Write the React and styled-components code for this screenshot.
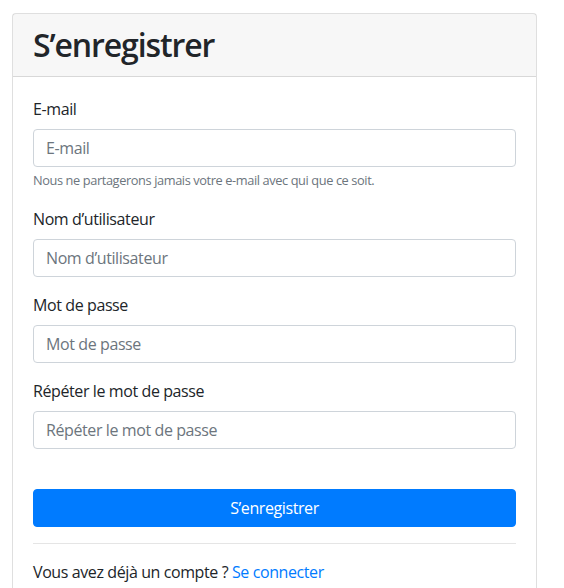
import React from "react";
import styled, { createGlobalStyle } from "styled-components";

const Global = createGlobalStyle`
  html, body { margin: 0; padding: 0; background: #fff; }
  body {
    font-family: "Open Sans", "Noto Sans", sans-serif;
    font-size: 16px;
    line-height: 1.5;
    letter-spacing: -0.025em;
    color: #212529;
  }
  * { box-sizing: border-box; }
`;

const Page = styled.div`
  padding: 13px 0 0 12px;
`;

const Card = styled.div`
  width: 525px;
  border: 1px solid rgba(0, 0, 0, 0.125);
  border-radius: 4px;
  background: #fff;
`;

const CardHeader = styled.div`
  padding: 12px 20px;
  background: rgba(0, 0, 0, 0.03);
  border-bottom: 1px solid rgba(0, 0, 0, 0.125);
`;

const Title = styled.h2`
  margin: 0;
  font-size: 32px;
  font-weight: 600;
  letter-spacing: -0.035em;
  line-height: 1.2;
`;

const CardBody = styled.form`
  padding: 20px;
  display: flex;
  flex-direction: column;
`;

const Group = styled.div`
  margin-bottom: 16px;
  display: flex;
  flex-direction: column;
`;

const Label = styled.label`
  margin-bottom: 8px;
  line-height: 24px;
`;

const Input = styled.input`
  height: 38px;
  width: 100%;
  padding: 6px 12px;
  font: inherit;
  font-size: 16px;
  letter-spacing: -0.025em;
  color: #495057;
  border: 1px solid #ced4da;
  border-radius: 4px;
  outline: none;
  &::placeholder { color: #6c757d; opacity: 1; }
`;

const Help = styled.small`
  margin-top: 4px;
  font-size: 12.8px;
  line-height: 19.2px;
  color: #6c757d;
`;

const Button = styled.button`
  margin-top: 24px;
  height: 38px;
  width: 100%;
  font: inherit;
  font-size: 16px;
  letter-spacing: -0.025em;
  color: #fff;
  background: #007bff;
  border: 1px solid #007bff;
  border-radius: 4px;
`;

const Rule = styled.hr`
  margin: 16px 0;
  border: 0;
  border-top: 1px solid rgba(0, 0, 0, 0.1);
`;

const Footer = styled.p`
  margin: 0;
  line-height: 24px;
`;

const Link = styled.a`
  color: #007bff;
  text-decoration: none;
`;

const fields = [
  { id: "email", label: "E-mail", type: "email", help: "Nous ne partagerons jamais votre e-mail avec qui que ce soit." },
  { id: "username", label: "Nom d’utilisateur", type: "text" },
  { id: "password", label: "Mot de passe", type: "password" },
  { id: "password2", label: "Répéter le mot de passe", type: "password" },
];

export default function App() {
  return (
    <Page>
      <Global />
      <Card>
        <CardHeader>
          <Title>S’enregistrer</Title>
        </CardHeader>
        <CardBody onSubmit={(e) => e.preventDefault()}>
          {fields.map((f) => (
            <Group key={f.id}>
              <Label htmlFor={f.id}>{f.label}</Label>
              <Input id={f.id} type={f.type} placeholder={f.label} />
              {f.help && <Help>{f.help}</Help>}
            </Group>
          ))}
          <Button type="submit">S’enregistrer</Button>
          <Rule />
          <Footer>
            Vous avez déjà un compte ? <Link href="#">Se connecter</Link>
          </Footer>
        </CardBody>
      </Card>
    </Page>
  );
}
